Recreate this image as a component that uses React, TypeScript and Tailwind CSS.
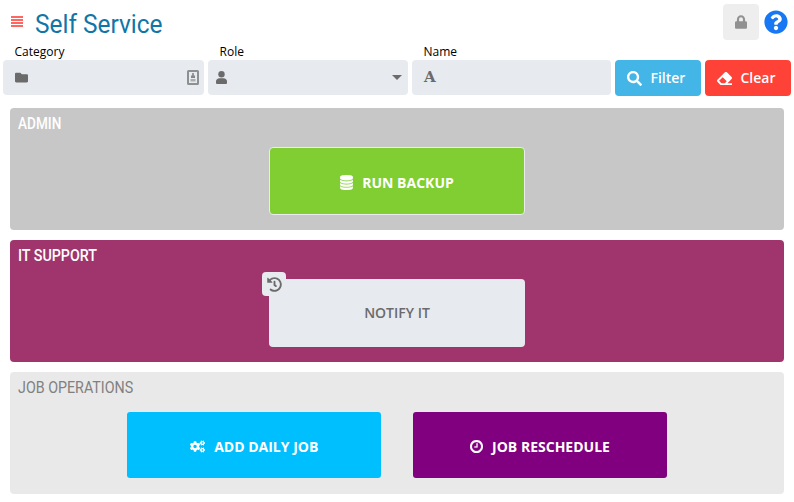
import type { ReactNode } from "react";
import { FaCogs, FaEraser, FaFolder, FaHistory, FaLock, FaQuestionCircle, FaSearch } from "react-icons/fa";

function DatabaseIcon() {
  return (
    <svg width="13" height="15" viewBox="0 0 1536 1792" fill="currentColor" stroke="currentColor" strokeWidth="40">
      <path d="M768 768q237 0 443-43t325-127v170q0 69-103 128t-280 93.5-385 34.500-385-34.500-280-93.500-103-128v-170q119 84 325 127t443 43zM768 1536q237 0 443-43t325-127v170q0 69-103 128t-280 93.500-385 34.500-385-34.500-280-93.500-103-128v-170q119 84 325 127t443 43zM768 1152q237 0 443-43t325-127v170q0 69-103 128t-280 93.500-385 34.500-385-34.500-280-93.500-103-128v-170q119 84 325 127t443 43zM768 0q208 0 385 34.500t280 93.500 103 128v128q0 69-103 128t-280 93.500-385 34.500-385-34.500-280-93.500-103-128v-128q0-69 103-128t280-93.500 385-34.500z" />
    </svg>
  );
}

function ClockIcon() {
  return (
    <svg width="13" height="13" viewBox="0 128 1536 1536" fill="currentColor" stroke="currentColor" strokeWidth="30">
      <path d="M896 544v448q0 14-9 23t-23 9h-320q-14 0-23-9t-9-23v-64q0-14 9-23t23-9h224v-352q0-14 9-23t23-9h64q14 0 23 9t9 23zM1312 896q0-148-73-273t-198-198-273-73-273 73-198 198-73 273 73 273 198 198 273 73 273-73 198-198 73-273zM1536 896q0 209-103 385.500t-279.500 279.500-385.500 103-385.500-103-279.500-279.500-103-385.500 103-385.500 279.500-279.500 385.500-103 385.500 103 279.500 279.500 103 385.500z" />
    </svg>
  );
}

function UserIcon() {
  return (
    <svg className="ml-2" width="11" height="13" viewBox="0 0 11 13" fill="currentColor">
      <circle cx="5.500" cy="3.200" r="3.200" />
      <path d="M3 7.200h5q3 .7 3 3.300v1.500q0 1-1 1H1q-1 0-1-1v-1.500q0-2.600 3-3.300z" />
    </svg>
  );
}

function ContactIcon() {
  return (
    <svg width="12" height="15" viewBox="0 0 12 15" fill="none">
      <rect x="1" y="1" width="10" height="13" rx="0.5" stroke="#8e8f91" strokeWidth="2" />
      <path d="M5.200 3h1.600v2.500H8V8H4V5.500h1.200z" fill="#858688" />
      <path d="M3.500 9h5v2.500h-5z" fill="#aaacaf" />
    </svg>
  );
}

function Field({ label, width, icon, end }: { label: string; width: string; icon: ReactNode; end?: ReactNode }) {
  return (
    <div className={width}>
      <div className="h-4 pl-[11.5px] text-[12px] leading-4 text-black">{label}</div>
      <div className="flex h-[35px] items-center justify-between rounded-[4px] bg-[#e7eaef] text-[#6b6b6b]">
        {icon}
        {end}
      </div>
    </div>
  );
}

function Section({ title, className, titleClass, children }: { title: string; className: string; titleClass: string; children: ReactNode }) {
  return (
    <section className={`h-[122px] w-[774px] rounded-[4px] ${className}`}>
      <h2 className={`ml-2 h-[30px] w-max origin-left whitespace-nowrap font-[Roboto,sans-serif] text-[17px] leading-[30px] ${titleClass}`}>{title}</h2>
      {children}
    </section>
  );
}

export default function App() {
  return (
    <main className="h-[502px] w-[794px] overflow-hidden bg-white font-['Open_Sans',sans-serif]">
      <header className="flex h-11 justify-between pl-[11px] pr-[6px] pt-1">
        <div className="flex">
          <div className="mt-3 flex h-[11px] w-3 flex-col justify-between">
            <div className="h-[2px] bg-[#ff6761]" />
            <div className="h-[2px] bg-[#ff6761]" />
            <div className="h-[2px] bg-[#ff6761]" />
            <div className="h-[2px] bg-[#ff6761]" />
          </div>
          <h1 className="ml-3 h-10 w-max origin-left scale-x-[0.94] whitespace-nowrap font-[Roboto,sans-serif] text-[26px] leading-10 text-[#0f76a8]">Self Service</h1>
        </div>
        <div className="flex gap-[5px]">
          <button className="flex h-9 w-9 items-center justify-center rounded-[4px] bg-[#eeeeee] text-[#919191]">
            <FaLock className="mb-px h-[14px] w-3" />
          </button>
          <FaQuestionCircle className="mt-[6px] h-6 w-6 text-[#1877f2]" />
        </div>
      </header>
      <div className="flex gap-1 pl-[3px]">
        <Field label="Category" width="w-[201px]" icon={<FaFolder className="ml-3 h-[13px] w-[13px]" />} end={<span className="mr-[5px]"><ContactIcon /></span>} />
        <Field
          label="Role"
          width="w-[200px]"
          icon={<UserIcon />}
          end={<svg className="mr-[6px]" width="10" height="5" viewBox="0 0 10 5" fill="currentColor"><path d="M0 0h10L5 5z" /></svg>}
        />
        <Field label="Name" width="w-[199px]" icon={<span className="ml-3 font-['DejaVu_Serif',serif] text-[15px] font-bold leading-none">A</span>} />
        <button className="mt-4 flex h-9 w-[86px] items-center rounded-[4px] bg-[#43b5e6] pb-px pl-3 text-[14px] font-semibold text-white">
          <FaSearch className="mr-[8.5px] mt-px h-[15px] w-[15px]" />
          Filter
        </button>
        <button className="mt-4 flex h-9 w-[86px] items-center rounded-[4px] bg-[#ff4238] pb-px pl-3 text-[14px] font-semibold text-white">
          <FaEraser className="mr-[8.5px] mt-px h-[15px] w-[15px]" />
          Clear
        </button>
      </div>
      <div className="mt-3 flex flex-col gap-[10px] pl-[10px]">
        <Section title="ADMIN" className="bg-[#c7c7c7]" titleClass="font-medium text-white scale-x-[0.8]">
          <button className="ml-[259px] mt-[9px] flex h-[68px] w-[256px] items-center justify-center gap-[9px] rounded-[4px] border border-[#e9ebee] bg-[#80ce31] pt-[3px] text-[14px] font-bold text-white">
            <DatabaseIcon />
            RUN BACKUP
          </button>
        </Section>
        <Section title="IT SUPPORT" className="bg-[#a0356d]" titleClass="font-medium text-white scale-x-[0.84]">
          <div className="relative ml-[259px] mt-[9px] w-[256px]">
            <button className="flex h-[68px] w-[256px] items-center justify-center rounded-[4px] bg-[#e7eaef] pb-[2px] text-[14px] font-semibold text-[#6b6b6b]">NOTIFY IT</button>
            <span className="absolute -left-[7px] -top-[7px] flex h-6 w-6 items-center justify-center rounded-[4px] bg-[#e7eaef] text-[#6b6b6b]">
              <FaHistory className="h-[15px] w-[15px]" />
            </span>
          </div>
        </Section>
        <Section title="JOB OPERATIONS" className="bg-[#e9e9e9]" titleClass="text-[#808080] scale-x-[0.84]">
          <div className="ml-[117px] mt-[10px] flex gap-8">
            <button className="flex h-[66px] w-[254px] items-center justify-center gap-[9.5px] rounded-[3px] bg-[#00bfff] pt-[3px] text-[14px] font-bold text-white">
              <FaCogs className="h-[15px] w-[15px]" />
              ADD DAILY JOB
            </button>
            <button className="flex h-[66px] w-[254px] items-center justify-center gap-[9px] rounded-[3px] bg-[#800080] pt-[3px] text-[14px] font-bold text-white">
              <ClockIcon />
              JOB RESCHEDULE
            </button>
          </div>
        </Section>
      </div>
    </main>
  );
}
